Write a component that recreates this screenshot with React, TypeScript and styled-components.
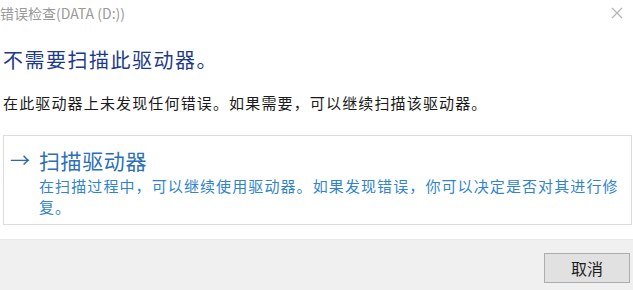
import { FC } from 'react'
import styled, { createGlobalStyle } from 'styled-components'

const GlobalStyle = createGlobalStyle`
  html, body {
    margin: 0;
    padding: 0;
    background: #ffffff;
  }
  body {
    font-family: "Noto Sans CJK SC", "Noto Sans", sans-serif;
  }
`

const Dialog = styled.div`
  width: 633px;
  height: 290px;
  background: #ffffff;
  display: flex;
  flex-direction: column;
  overflow: hidden;
`

const TitleBar = styled.div`
  height: 26px;
  display: flex;
  align-items: center;
  justify-content: space-between;
  padding: 0 6px 0 0;
`

const Caption = styled.div`
  font-size: 14px;
  color: #9a9a9a;
  letter-spacing: 0;
`

const Close = styled.div`
  width: 20px;
  height: 20px;
  display: flex;
  align-items: center;
  justify-content: center;
`

const Content = styled.div`
  flex: 1;
  padding: 20px 1px 0 3px;
  display: flex;
  flex-direction: column;
`

const Heading = styled.div`
  font-size: 20px;
  line-height: 28px;
  color: #1d3a8a;
  letter-spacing: 1.5px;
`

const Body = styled.div`
  margin-top: 18px;
  font-size: 15px;
  line-height: 22px;
  color: #1a1a1a;
  letter-spacing: 1.15px;
`

const CommandLink = styled.div`
  margin-top: 21px;
  height: 90px;
  border: 1px solid #dcdcdc;
  display: flex;
  padding: 9px 10px 0 6px;
  box-sizing: border-box;
  gap: 9px;
`

const Arrow = styled.div`
  font-size: 20px;
  line-height: 30px;
  color: #2a6cb0;
`

const LinkText = styled.div`
  display: flex;
  flex-direction: column;
`

const LinkTitle = styled.div`
  font-size: 21px;
  line-height: 30px;
  color: #2a6fb8;
  letter-spacing: 0.6px;
`

const LinkDesc = styled.div`
  font-size: 15px;
  line-height: 21px;
  color: #3184cc;
  letter-spacing: 1.1px;
`

const Footer = styled.div`
  margin-top: 13px;
  height: 51px;
  background: #f0f0f0;
  border-top: 1px solid #e8e8e8;
  display: flex;
  justify-content: flex-end;
  align-items: flex-start;
  padding: 13px 3px 0 0;
  box-sizing: border-box;
`

const Button = styled.button`
  width: 86px;
  height: 30px;
  background: #e1e1e1;
  border: 1px solid #adadad;
  font-family: "Noto Sans CJK SC", sans-serif;
  font-size: 16px;
  color: #1e1e1e;
  padding: 0;
`

const App: FC = () => {
  return (
    <Dialog>
      <GlobalStyle />
      <TitleBar>
        <Caption>错误检查(DATA (D:))</Caption>
        <Close>
          <svg width="12" height="12" viewBox="0 0 12 12">
            <path d="M1 1L11 11M11 1L1 11" stroke="#b4b4b4" strokeWidth="1.2" />
          </svg>
        </Close>
      </TitleBar>
      <Content>
        <Heading>不需要扫描此驱动器。</Heading>
        <Body>在此驱动器上未发现任何错误。如果需要，可以继续扫描该驱动器。</Body>
        <CommandLink>
          <Arrow>→</Arrow>
          <LinkText>
            <LinkTitle>扫描驱动器</LinkTitle>
            <LinkDesc>
              在扫描过程中，可以继续使用驱动器。如果发现错误，你可以决定是否对其进行修复。
            </LinkDesc>
          </LinkText>
        </CommandLink>
      </Content>
      <Footer>
        <Button>取消</Button>
      </Footer>
    </Dialog>
  )
}

export default App
